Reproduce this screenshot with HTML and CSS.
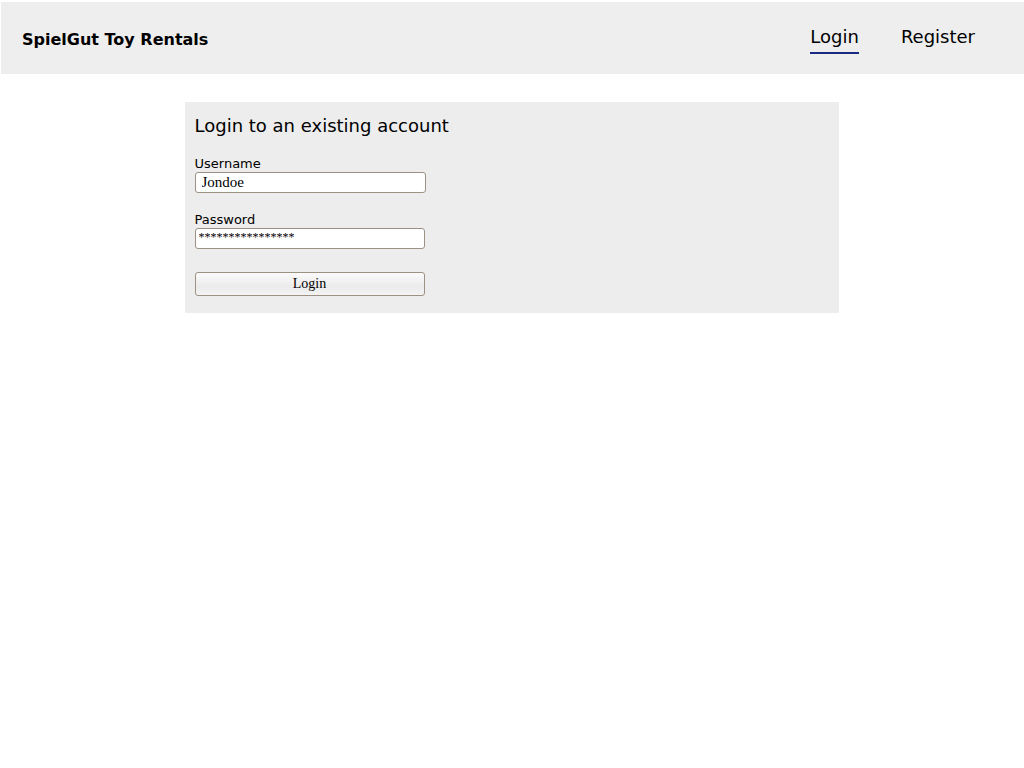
FILE: index.html
```html
<!DOCTYPE html>
<html>
<head>
<meta charset="utf-8">
<link rel="stylesheet" href="styles.css">
</head>
<body>
<header class="topbar">
  <div class="brand">SpielGut Toy Rentals</div>
  <nav class="nav">
    <a class="nav-link active" href="#">Login</a>
    <a class="nav-link" href="#">Register</a>
  </nav>
</header>
<main class="card">
  <h1 class="card-title">Login to an existing account</h1>
  <form class="form">
    <label class="field">
      <span class="label">Username</span>
      <input class="input input-user" type="text" value="Jondoe">
    </label>
    <label class="field">
      <span class="label">Password</span>
      <input class="input input-pass" type="text" value="****************">
    </label>
    <button class="btn" type="button">Login</button>
  </form>
</main>
</body>
</html>
```
FILE: styles.css
```css
html, body {
  margin: 0;
  padding: 0;
  background: #fff;
  font-family: "DejaVu Sans", sans-serif;
  color: #000;
}
body {
  padding: 2px 0 0 1px;
}
.topbar {
  height: 72px;
  background: #eeeeee;
  display: flex;
  align-items: center;
  justify-content: space-between;
  padding: 0 49px 0 21px;
}
.brand {
  font-weight: bold;
  font-size: 16px;
  padding-top: 3px;
}
.nav {
  display: flex;
  gap: 42px;
  align-items: center;
  padding-top: 4px;
}
.nav-link {
  font-size: 18px;
  color: #000;
  text-decoration: none;
  padding-bottom: 5px;
  border-bottom: 2px solid transparent;
}
.nav-link.active {
  border-bottom-color: #1b2b84;
}
.card {
  width: 634px;
  margin: 28px auto 0;
  background: #ededed;
  padding: 10px 10px 17px;
  position: relative;
  left: -1px;
}
.card-title {
  font-size: 18px;
  font-weight: normal;
  margin: 3px 0 19px;
}
.form {
  display: flex;
  flex-direction: column;
}
.field {
  display: flex;
  flex-direction: column;
  align-items: flex-start;
  margin-bottom: 18px;
}
.label {
  font-size: 13px;
  line-height: 17px;
}
.input {
  width: 231px;
  height: 21px;
  box-sizing: border-box;
  border: 1px solid #9d9184;
  border-radius: 3px;
  background: #fff;
  font-family: "Liberation Serif", serif;
  font-size: 15px;
  padding: 0 6px;
  margin: 0;
}
.input-pass {
  width: 230px;
  padding: 0 3px 3px;
  font-size: 12px;
}
.btn {
  width: 230px;
  height: 24px;
  margin-top: 5px;
  border: 1px solid #9d9184;
  border-radius: 3px;
  background: linear-gradient(#fbfbfb, #ebebeb 60%, #f3f3f3);
  font-family: "Liberation Serif", serif;
  font-size: 14px;
  color: #000;
  padding: 0;
}
```
